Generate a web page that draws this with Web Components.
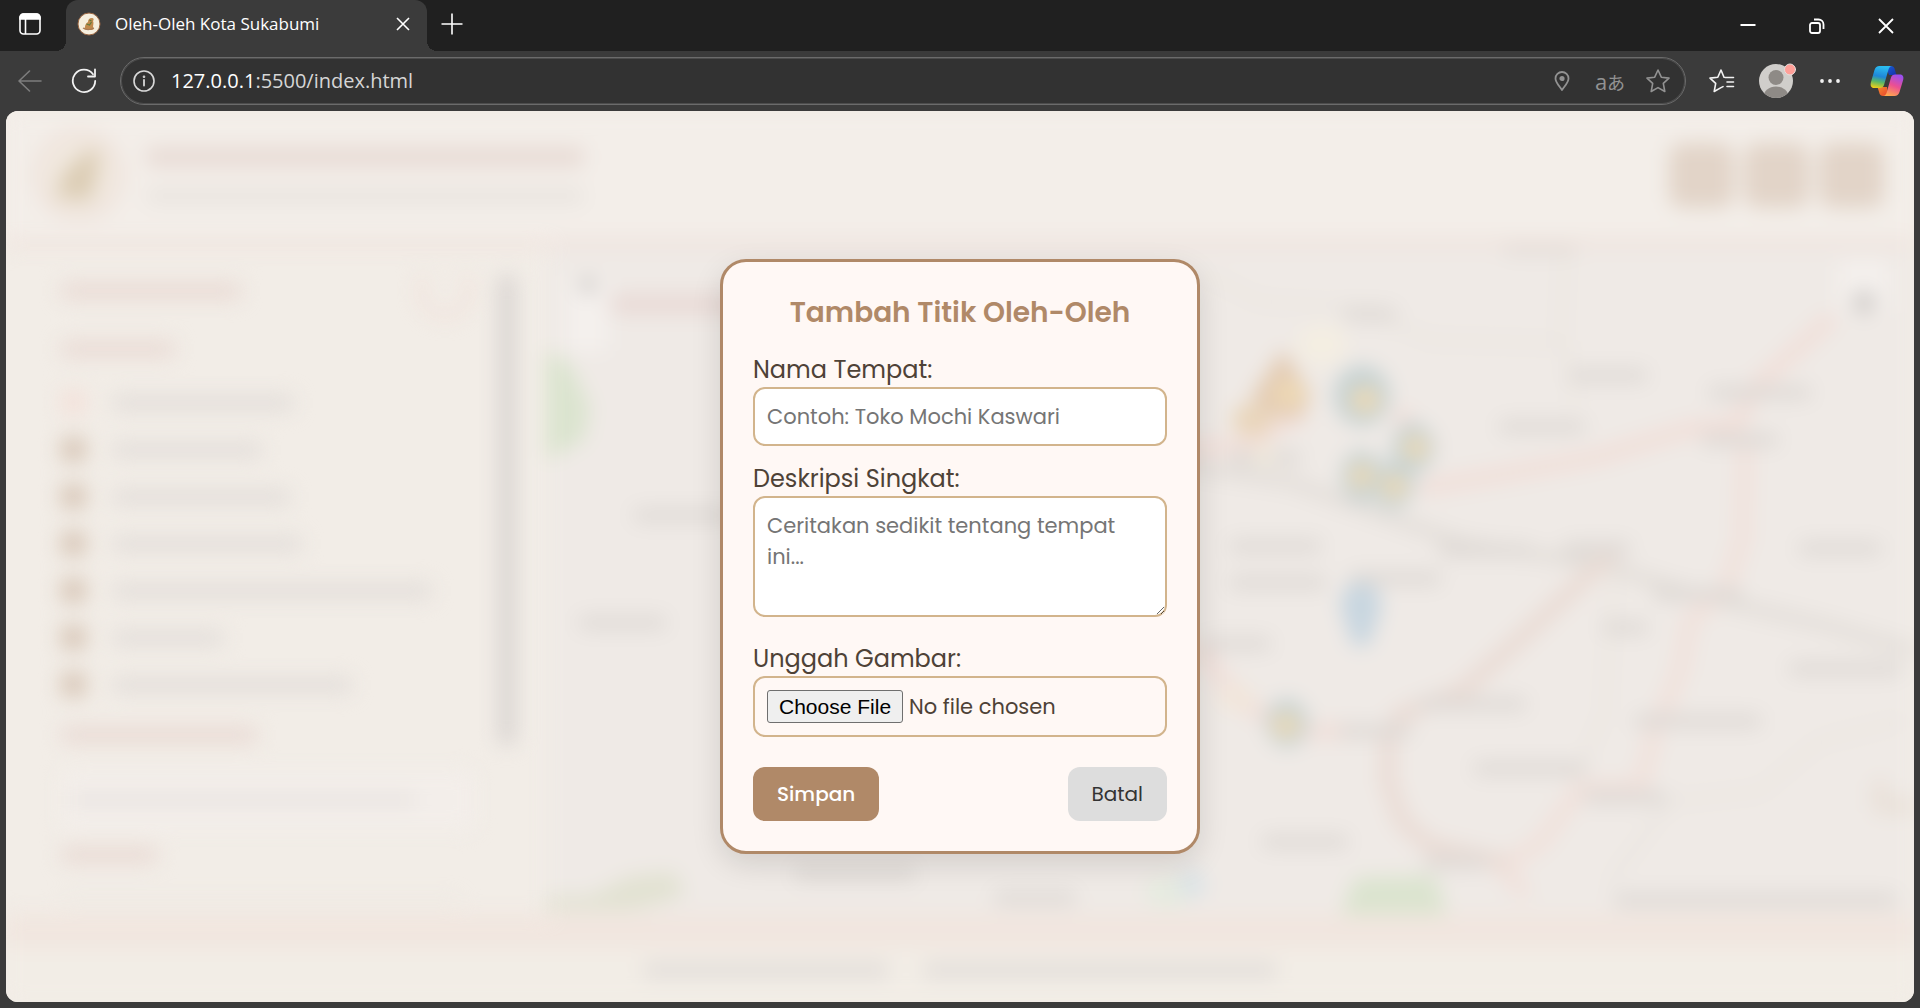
<!DOCTYPE html>
<html lang="id">
<head>
<meta charset="utf-8">
<title>Oleh-Oleh Kota Sukabumi</title>
<style>
  html, body { margin: 0; height: 100%; }
  body { background: #3b3b3b; font-family: Poppins, Inter, "Liberation Sans", sans-serif; }
</style>
</head>
<body>
<browser-window>
  <tab-strip slot="tabs">Oleh-Oleh Kota Sukabumi</tab-strip>
  <address-toolbar slot="toolbar"></address-toolbar>
  <map-page></map-page>
  <place-dialog slot="dialog" heading="Tambah Titik Oleh-Oleh"></place-dialog>
</browser-window>

<script>
const define = (name, html) => {
  const template = document.createElement('template');
  template.innerHTML = html;
  customElements.define(name, class extends HTMLElement {
    constructor() {
      super();
      this.attachShadow({ mode: 'open' }).append(template.content.cloneNode(true));
      const heading = this.shadowRoot.querySelector('[data-heading]');
      if (heading) heading.textContent = this.getAttribute('heading');
    }
  });
};

define('browser-window', `
<style>
  :host { display: flex; flex-direction: column; height: 100vh; min-height: 860px; background: #3b3b3b; }
  main { flex: 1; min-height: 0; margin: 0 6px 6px; border-radius: 12px; overflow: hidden; display: grid; grid-template: minmax(0, 1fr) / minmax(0, 1fr); background: #f2ede7; }
  .layer, main > ::slotted(*) { grid-area: 1 / 1; min-width: 0; min-height: 0; }
  .layer { display: grid; place-items: center; z-index: 1; }
</style>
<slot name="tabs"></slot>
<slot name="toolbar"></slot>
<main>
  <slot></slot>
  <div class="layer"><slot name="dialog"></slot></div>
</main>`);

define('tab-strip', `
<style>
  :host { display: flex; height: 51px; flex: none; background: #202020; color: #fff; font-family: "Segoe UI", "Open Sans", sans-serif; }
  button { all: unset; display: grid; place-items: center; }
  svg { display: block; fill: none; stroke: #fff; }
  .side { width: 60px; margin-right: 6px; }
  .side svg { margin-top: -3px; }
  .tab { position: relative; box-sizing: border-box; width: 361px; display: flex; align-items: center; padding: 0 12px 3px 11px; gap: 14px; border-radius: 12px 12px 0 0; background: #3b3b3b; font-size: 17px; line-height: 24px; }
  .tab::before, .tab::after { content: ""; position: absolute; bottom: 0; width: 10px; height: 10px; }
  .tab::before { right: 100%; background: radial-gradient(circle at 0 0, #202020 10px, #3b3b3b 10px); }
  .tab::after { left: 100%; background: radial-gradient(circle at 100% 0, #202020 10px, #3b3b3b 10px); }
  .name { flex: 1; white-space: nowrap; }
  .close { width: 24px; height: 24px; }
  .new { width: 50px; margin-bottom: 4px; }
  .window { margin-left: auto; display: flex; }
  .window button { width: 69px; }
</style>
<button class="side" aria-label="Tab actions">
  <svg width="24" height="24" viewBox="0 0 24 24" stroke-width="1.6"><rect x="2" y="2" width="20" height="20" rx="3.5"/><path d="M2 7V5.5A3.5 3.5 0 0 1 5.500 2h13A3.500 3.500 0 0 1 22 5.500V7z" fill="#fff"/><path d="M7.500 7v15"/></svg>
</button>
<div class="tab">
  <svg width="24" height="24" viewBox="0 0 24 24"><circle cx="12" cy="12" r="11" fill="#f6efdf" stroke="#9a6540" stroke-width="1"/><path d="M8 15c0-2 1-4 3-5 0-2 1-4 4-4 2 0 2 2 1 3 1 2 0 4 0 6l1 2-2 1c-3 0-6 0-8-1z" fill="#c08a4e" stroke="none"/><path d="M9.500 12l3 1 2-3M12.500 8l2 1" stroke="#5f7a3c" stroke-width="1.200"/><path d="M6 16c3 2 7 2 11 0" stroke="#a87a58" stroke-width="1.200"/></svg>
  <span class="name"><slot></slot></span>
  <button class="close" aria-label="Close tab"><svg width="14" height="14" viewBox="0 0 14 14" stroke-width="1.600"><path d="M1 1l12 12M13 1L1 13"/></svg></button>
</div>
<button class="new" aria-label="New tab"><svg width="22" height="22" viewBox="0 0 22 22" stroke-width="1.600"><path d="M11 0.500v21M0.500 11h21"/></svg></button>
<div class="window">
  <button aria-label="Minimize"><svg width="16" height="16" viewBox="0 0 16 16" stroke-width="2"><path d="M0.500 7h15"/></svg></button>
  <button aria-label="Restore"><svg width="16" height="16" viewBox="0 0 16 16" stroke-width="1.800"><rect x="1" y="5" width="10" height="10" rx="2"/><path d="M5 1.500h4.500a5 5 0 0 1 5 5V11"/></svg></button>
  <button aria-label="Close"><svg width="16" height="16" viewBox="0 0 16 16" stroke-width="1.800"><path d="M1 1l14 14M15 1L1 15"/></svg></button>
</div>`);

define('address-toolbar', `
<style>
  :host { display: flex; height: 60px; flex: none; align-items: center; box-sizing: border-box; padding: 0 3px; background: #3b3b3b; font-family: "Segoe UI", "Open Sans", sans-serif; }
  button { all: unset; width: 54px; height: 48px; display: grid; place-items: center; }
  svg { display: block; fill: none; stroke: #f2f2f2; stroke-width: 1.600; stroke-linejoin: round; stroke-linecap: round; }
  .field { flex: 1; min-width: 0; box-sizing: border-box; height: 48px; margin: 0 9px; border: 1px solid #6b6b6b; border-radius: 24px; background: #323232; display: flex; align-items: center; padding-right: 3px; box-shadow: inset 0 0 0 1px #4c4c4c; }
  .field button { width: 48px; height: 46px; color: #929292; }
  .field svg { stroke: #929292; }
  .field .info { width: 46px; }
  .field .info svg { stroke: #d8d8d8; }
  .url { flex: 1; min-width: 0; display: flex; font-size: 20px; line-height: 28px; color: #d6d6d6; margin-left: 4px; }
  .url b { font-weight: 400; color: #fff; }
  .lang { font-size: 22px; line-height: 28px; display: flex; align-items: baseline; }
  .lang i { font: 18px/28px "Noto Sans CJK JP", sans-serif; }
  .wide { width: 60px; }
  .wide svg, .avatar svg { stroke: none; }
</style>
<button aria-label="Back"><svg style="stroke:#7d7d7d" width="24" height="22" viewBox="0 0 24 22"><path d="M11.500 1L1 11l10.500 10M1 11h22"/></svg></button>
<button aria-label="Refresh"><svg width="26" height="26" viewBox="0 0 26 26" style="stroke-width:1.800"><path d="M22 6.200A11.200 11.200 0 1 0 24.200 13M24 1.500v7h-7"/></svg></button>
<div class="field">
  <button class="info" aria-label="Site information"><svg width="22" height="22" viewBox="0 0 22 22"><circle cx="11" cy="11" r="10"/><path d="M11 10v5.500" stroke-width="1.800"/><circle cx="11" cy="6.800" r="0.500"/></svg></button>
  <span class="url"><b>127.0.0.1</b><span>:5500/index.html</span></span>
  <button aria-label="Location"><svg width="16" height="20" viewBox="0 0 16 20" style="stroke-width:1.800"><path d="M8 19C5 14.500 1.500 11.500 1.500 7.500a6.500 6.500 0 0 1 13 0C14.500 11.500 11 14.500 8 19z"/><circle cx="8" cy="7.500" r="1.700" fill="#929292"/></svg></button>
  <button aria-label="Translate"><span class="lang">a<i>あ</i></span></button>
  <button aria-label="Favorite"><svg width="24" height="24" viewBox="0 0 24 24"><path d="M12 1l3.300 7.200 7.700.9-5.700 5.300 1.500 8.100L12 18.600l-6.800 3.900 1.500-8.100L1 9.100l7.700-.9z"/></svg></button>
</div>
<button aria-label="Favorites"><svg width="26" height="24" viewBox="0 0 26 24"><path d="M16 8.500h8.500M18 13h6.500M18 17.500h6.500M15 8.200L12 1 8.800 8.200 1 9.100l5.700 5.300-1.500 8.100L12 18.600l2-1"/></svg></button>
<button class="avatar" aria-label="Profile"><svg width="42" height="36" viewBox="0 0 42 36"><defs><clipPath id="c"><circle cx="21" cy="18" r="17"/></clipPath></defs><circle cx="21" cy="18" r="17" fill="#d0cecb"/><g clip-path="url(#c)" fill="#8e8a86"><circle cx="21" cy="14.500" r="7.500"/><ellipse cx="21" cy="34" rx="12.500" ry="10.500"/></g><circle cx="35" cy="6.500" r="5.500" fill="#ff9f98" stroke="#e4dfdc" stroke-width="1"/></svg></button>
<button aria-label="Settings and more"><svg width="20" height="4" viewBox="0 0 20 4"><g fill="#f2f2f2" stroke="none"><circle cx="2" cy="2" r="1.900"/><circle cx="10" cy="2" r="1.900"/><circle cx="18" cy="2" r="1.900"/></g></svg></button>
<button class="wide" aria-label="Copilot"><svg width="34" height="32" viewBox="0 0 34 32">
  <defs>
    <linearGradient id="a" x1="0.400" y1="0" x2="0.200" y2="1"><stop offset="0" stop-color="#2bbcf0"/><stop offset="0.450" stop-color="#1f86d8"/><stop offset="0.700" stop-color="#5bb865"/><stop offset="1" stop-color="#f5cf16"/></linearGradient>
    <linearGradient id="b" x1="0.700" y1="0" x2="0.300" y2="1"><stop offset="0" stop-color="#9a4ff0"/><stop offset="0.500" stop-color="#ec4f92"/><stop offset="1" stop-color="#ffa94d"/></linearGradient>
    <linearGradient id="d" x1="0" y1="0" x2="1" y2="1"><stop offset="0" stop-color="#1b5fd6"/><stop offset="1" stop-color="#1330a8"/></linearGradient>
    <linearGradient id="e" x1="0" y1="0" x2="1" y2="1"><stop offset="0" stop-color="#f58a2c"/><stop offset="1" stop-color="#e8432f"/></linearGradient>
  </defs>
  <path d="M16 1h5c2 0 3 1 3.500 2.500L26.500 10H19z" fill="url(#d)"/>
  <path d="M18 31h-5c-2 0-3-1-3.500-2.500L7.500 22H17z" fill="url(#e)"/>
  <path d="M9.500 1H22c-2 0-3 2-3.500 3.500L14 20c-.6 2-2 3-4 3H4c-3 0-4-2.500-3-6L4.500 5C5.300 2.400 7 1 9.500 1z" fill="url(#a)"/>
  <path d="M24.500 31H13c2 0 3-1.500 3.500-3L21 12.500C21.600 10.500 23 9.500 25 9.500h5c3 0 4 2.500 3 6L29.500 27c-.8 2.600-2.500 4-5 4z" fill="url(#b)"/>
</svg></button>`);

define('soft-line', `
<style>
  :host { display: block; flex: none; width: var(--w, 180px); max-width: 100%; height: var(--h, 16px); border-radius: 6px; background: var(--tone, #e3deda); }
</style>`);

define('layer-row', `
<style>
  :host { display: flex; align-items: center; gap: 26px; height: 47px; }
  input { appearance: none; margin: 0; box-sizing: border-box; width: 25px; height: 25px; border-radius: 5px; background: var(--box, #d8c7b8); }
</style>
<input type="checkbox" checked aria-label="Layer">
<slot></slot>`);

define('layer-panel', `
<style>
  :host { display: flex; box-sizing: border-box; width: 486px; flex: none; margin: 28px 30px 12px 24px; overflow: hidden; }
  .body { flex: 1; min-width: 0; padding-left: 31px; }
  .top { display: flex; justify-content: space-between; align-items: center; height: 56px; padding-right: 26px; margin-top: -12px; }
  .top button { width: 54px; height: 54px; border-radius: 50%; background: none; border: 5px solid #f1dcd5; }
  .head { --tone: #e9dad4; }
  .one { margin: 22px 0; }
  .two { margin: 19px 0 27px; }
  .box { height: 60px; display: grid; align-items: center; padding: 0 10px; margin-right: 24px; border-radius: 10px; background: #f3eeea; }
  .three { margin: 17px 0 36px; }
  .bar { width: 18px; height: 470px; border-radius: 6px; background: #dad5d2; }
</style>
<div class="body">
  <div class="top"><soft-line class="head" style="--w:180px"></soft-line><button aria-label="Panel"></button></div>
  <soft-line class="head one" style="--w:114px"></soft-line>
  <layer-row style="--box:#f3e1da"><soft-line style="--w:182px"></soft-line></layer-row>
  <layer-row><soft-line style="--w:150px"></soft-line></layer-row>
  <layer-row><soft-line style="--w:178px"></soft-line></layer-row>
  <layer-row><soft-line style="--w:190px"></soft-line></layer-row>
  <layer-row><soft-line style="--w:320px"></soft-line></layer-row>
  <layer-row><soft-line style="--w:112px"></soft-line></layer-row>
  <layer-row><soft-line style="--w:240px"></soft-line></layer-row>
  <soft-line class="head two" style="--w:196px"></soft-line>
  <div class="box"><soft-line style="--w:345px;--h:12px;--tone:#e8e3e0"></soft-line></div>
  <soft-line class="head three" style="--w:96px"></soft-line>
  <soft-line style="--w:400px;--h:12px;--tone:#e9e5de"></soft-line>
</div>
<div class="bar"></div>`);

define('map-view', `
<style>
  :host { display: block; flex: 1; min-width: 0; background: #efeae6; }
  svg { display: block; width: 100%; height: 100%; fill: none; stroke-linecap: round; stroke-linejoin: round; }
</style>
<svg viewBox="546 248 1368 664" preserveAspectRatio="none">
  <g fill="#dbe4cf"><path d="M546 350l24 15 20 42-6 33-38 20z"/><path d="M1355 876l80-2 12 38h-106z"/><path d="M546 894h44l40-20 45-4 10 24-50 14h-89z" fill="#e2e2d2"/><ellipse cx="1168" cy="890" rx="24" ry="14" fill="#e5ebdf"/></g>
  <ellipse cx="1192" cy="882" rx="14" ry="14" fill="#dbe3e6"/>
  <ellipse cx="1322" cy="345" rx="26" ry="20" fill="#f4eee2"/>
  <g stroke="#e9e4de" stroke-width="6"><path d="M1200 272l60 30 120 8M1370 315l60 25 130 4 5-95M1565 344l10 60M1615 550l-10 160-30 70M1900 720l-80 20-60 50-90 10-60 80"/></g>
  <path d="M1160 462l130 20 80 28 90 32 140 22 110 34 120 28 84 24" stroke="#e1dcd7" stroke-width="11"/>
  <g stroke="#f1dfd9" stroke-width="16">
    <path d="M1828 322l-73 65-17 38-48 4-92 28-98 18-75 12M1160 450l90-5 50-30M1400 415l30 30"/>
    <path d="M1745 450l-3 90-17 50-35 30-10 50-25 60-15 55-60 2-40 55-40 22 22 24" stroke="#f1e1db"/>
    <path d="M1615 550l-75 70-78 70-62 24-12 26v40l14 40 28 24 70 16" stroke="#eadbd4"/>
    <path d="M1200 650l40 50 50 30h60"/>
    <path d="M620 305h110" stroke="#e9dad6" stroke-width="20"/>
  </g>
  <g stroke="#dfdad6" stroke-width="14">
    <path d="M1510 248h60M1350 315h40M1575 376h66M1505 427h74M1715 393h90M1708 440h64M1235 458h60M1235 546h80M1445 550h80M1570 548h54M1805 548h70M1235 582h85M1355 578h80M1660 594h76M1608 627h34M1210 643h55M1795 668h100M1425 703h95M1345 730h60M1640 720h115M1480 767h100M1590 796h70M1268 840h74M1430 861h50M1620 898h270M640 515h85M585 622h75M800 872h110M1000 896h70"/>
  </g>
  <path d="M1880 785v20h34" stroke="#e9e0d8" stroke-width="16"/>
  <g fill="#e7d8ca"><path d="M1283 350l28 45-10 22h-30l-20-20z" fill="#e3cbb3"/><ellipse cx="1252" cy="420" rx="20" ry="16" fill="#e9d5ba"/></g>
  <g fill="#c6d2d3"><ellipse cx="1362" cy="396" rx="28" ry="30"/><ellipse cx="1413" cy="448" rx="21" ry="25"/><ellipse cx="1362" cy="476" rx="21" ry="25"/><ellipse cx="1393" cy="485" rx="21" ry="23"/><ellipse cx="1287" cy="722" rx="21" ry="24"/><path d="M1361 582c16 0 22 15 20 27l-12 36h-16l-12-36c-2-12 4-27 20-27z" fill="#c8d6e0"/></g>
  <g fill="#efdab4"><ellipse cx="1289" cy="394" rx="15" ry="13"/><ellipse cx="1365" cy="400" rx="14" ry="13"/><ellipse cx="1415" cy="448" rx="12" ry="12"/><ellipse cx="1362" cy="476" rx="12" ry="12"/><ellipse cx="1394" cy="486" rx="12" ry="12"/><ellipse cx="1286" cy="724" rx="13" ry="12"/><ellipse cx="1264" cy="456" rx="10" ry="8" fill="#f1ebd8"/><ellipse cx="1236" cy="697" rx="18" ry="13" fill="#f2e6da"/></g>
  <g fill="#f4f0ed"><rect x="566" y="276" width="42" height="76" rx="6"/><rect x="1838" y="262" width="52" height="52" rx="6"/></g>
  <g fill="#d2cecb"><circle cx="588" cy="286" r="9"/><circle cx="1864" cy="303" r="12"/></g>
</svg>`);

define('map-page', `
<style>
  :host { display: flex; flex-direction: column; background: #f2ede7; overflow: hidden; }
  .blur { flex: 1; min-height: 0; display: flex; flex-direction: column; filter: blur(10px); }
  header { display: flex; align-items: center; height: 128px; flex: none; box-sizing: border-box; padding: 0 30px 0 28px; gap: 22px; background: #f3eee9; }
  .logo { width: 90px; height: 90px; flex: none; }
  .names { display: flex; flex-direction: column; gap: 22px; }
  .actions { display: flex; gap: 10px; margin-left: auto; }
  .actions button { width: 65px; height: 65px; border: 0; border-radius: 14px; background: #e2d4c8; }
  .middle { flex: 1; min-height: 0; display: flex; border-top: 8px solid #efe1db; }
  map-view { min-height: 0; }
  .band { height: 34px; flex: none; background: #f1e6df; }
  footer { flex: none; height: 54px; box-sizing: border-box; padding-bottom: 10px; display: flex; align-items: center; justify-content: center; gap: 34px; background: #f2ede6; }
</style>
<div class="blur" inert>
  <header>
    <svg class="logo" viewBox="0 0 90 90"><circle cx="45" cy="45" r="42" fill="#f1e9e0" stroke="#eedfd8" stroke-width="6"/><path d="M22 68l7-26 26-23 12 4-6 34-6 14z" fill="#dccdb5"/></svg>
    <div class="names"><soft-line style="--w:438px;--h:20px;--tone:#e8dbd5"></soft-line><soft-line style="--w:438px;--h:14px;--tone:#e8e3de"></soft-line></div>
    <div class="actions"><button aria-label="Action"></button><button aria-label="Action"></button><button aria-label="Action"></button></div>
  </header>
  <div class="middle"><layer-panel></layer-panel><map-view></map-view></div>
  <div class="band"></div>
  <footer><soft-line style="--w:246px;--tone:#e3deda"></soft-line><soft-line style="--w:354px;--tone:#e3deda"></soft-line></footer>
</div>`);

define('form-field', `
<style>
  :host { display: flex; flex-direction: column; }
</style>
<slot></slot>`);

define('place-dialog', `
<style>
  :host { display: block; box-sizing: border-box; width: 480px; max-width: 100%; padding: 30px; border: 3px solid #b08968; border-radius: 26px; background: #fff8f5; color: #4e4237; box-shadow: 0 10px 30px rgba(0, 0, 0, 0.120); }
  h2 { margin: 0 0 19px; font-size: 28px; line-height: 42px; font-weight: 600; text-align: center; color: #b08968; }
  label { font-size: 24px; line-height: 34px; }
  input, textarea { box-sizing: border-box; width: 100%; margin: 0; padding: 12px; border: 2px solid #d2b48c; border-radius: 12px; background: #fff; color: inherit; font-family: inherit; font-size: 21px; line-height: 31px; }
  ::placeholder { color: #757575; opacity: 1; }
  input { height: 59px; }
  textarea { display: block; height: 121px; resize: vertical; }
  form-field { margin-bottom: 16px; }
  .area { margin-bottom: 25px; }
  .file { margin-bottom: 30px; }
  input[type="file"] { height: 61px; background: transparent; }
  ::file-selector-button { box-sizing: border-box; height: 33px; padding: 0 11px; margin: 0 6px 0 0; border: 1px solid #6f6f6f; border-radius: 3px; background: #efefef; color: #000; font: 21px/31px "Liberation Sans", Arial, sans-serif; }
  .actions { display: flex; justify-content: space-between; }
  button { height: 54px; border: 0; border-radius: 12px; padding: 0 24px; font-family: inherit; font-size: 20px; line-height: 30px; }
  .save { background: #b08968; color: #fff; font-weight: 500; }
  .cancel { background: #ddd; color: #333; }
</style>
<form>
  <h2 data-heading></h2>
  <form-field><label for="name">Nama Tempat:</label><input id="name" type="text" placeholder="Contoh: Toko Mochi Kaswari"></form-field>
  <form-field class="area"><label for="text">Deskripsi Singkat:</label><textarea id="text" placeholder="Ceritakan sedikit tentang tempat ini..."></textarea></form-field>
  <form-field class="file"><label for="image">Unggah Gambar:</label><input id="image" type="file" accept="image/*"></form-field>
  <div class="actions"><button class="save" type="button">Simpan</button><button class="cancel" type="button">Batal</button></div>
</form>`);
</script>
</body>
</html>
